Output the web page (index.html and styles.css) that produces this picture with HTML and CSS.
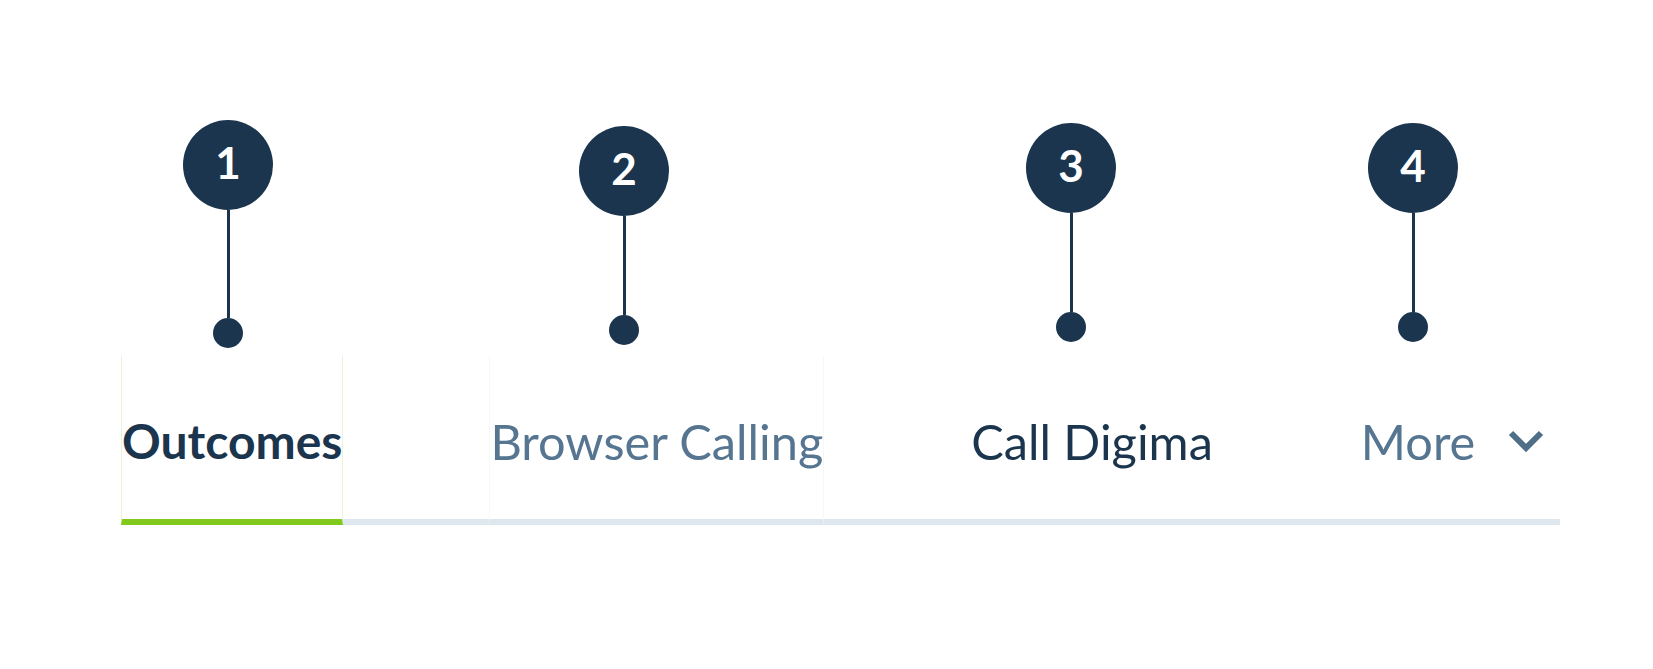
FILE: index.html
```html
<!DOCTYPE html>
<html lang="en">
<head>
  <meta charset="UTF-8">
  <title>Tabs</title>
  <link rel="stylesheet" href="styles.css">
</head>
<body>

  <div class="stage">
    <div class="pin pin1"><div class="bubble">1</div><div class="stem"></div><div class="dot"></div></div>
    <div class="pin pin2"><div class="bubble">2</div><div class="stem"></div><div class="dot"></div></div>
    <div class="pin pin3"><div class="bubble">3</div><div class="stem"></div><div class="dot"></div></div>
    <div class="pin pin4"><div class="bubble">4</div><div class="stem"></div><div class="dot"></div></div>

    <nav class="tabs">
      <a class="tab active">Outcomes</a>
      <a class="tab muted framed">Browser Calling</a>
      <a class="tab">Call Digima</a>
      <a class="tab muted more">More
        <svg class="chevron" width="36" height="22" viewBox="0 0 36 22">
          <polyline points="3,3 18,18 33,3" fill="none" stroke="#4f6f88" stroke-width="6"/>
        </svg>
      </a>
    </nav>
  </div>

</body>
</html>
```

FILE: styles.css
```css
html {
  box-sizing: border-box;
  background: #fff;
}

*, *:before, *:after {
  box-sizing: inherit;
}

body {
  margin: 0;
  font-family: 'Lato', 'Liberation Sans', sans-serif;
  color: #1a354d;
}

.stage {
  position: relative;
  padding: 356px 0 0 121px;
  height: 669px;
}

.tabs {
  display: flex;
  gap: 146px;
  width: 1439px;
  border-bottom: 6px solid #dfe7ee;
}

.tab {
  display: flex;
  align-items: center;
  padding: 56px 0 49px;
  font-size: 48.7px;
  line-height: 58px;
  margin-bottom: -6px;
  border-bottom: 6px solid transparent;
  border-left: 1px solid transparent;
  border-right: 1px solid transparent;
}

.tab.active {
  font-size: 48px;
  font-weight: 700;
  border-bottom-color: #82c91e;
  border-left-color: #e8f3da;
  border-right-color: #e8f3da;
}

.tab.framed {
  border-left-color: #f5f7f9;
  border-right-color: #f5f7f9;
}

.muted {
  color: #557591;
}

.chevron {
  margin-left: 33px;
}

/* annotation pins */
.pin {
  position: absolute;
  width: 90px;
  display: flex;
  flex-direction: column;
  align-items: center;
}

.bubble {
  width: 90px;
  height: 90px;
  border-radius: 50%;
  background: #1a354d;
  color: #fff;
  font-size: 44px;
  font-weight: 700;
  line-height: 1;
  display: flex;
  align-items: center;
  justify-content: center;
  padding-bottom: 7px;
}

.stem {
  width: 3px;
  height: 99px;
  background: #1a354d;
}

.dot {
  width: 30px;
  height: 30px;
  border-radius: 50%;
  background: #1a354d;
}

.pin1 { left: 183px; top: 120px; }
.pin1 .stem { height: 108px; }
.pin2 { left: 579px; top: 126px; }
.pin3 { left: 1026px; top: 123px; }
.pin4 { left: 1368px; top: 123px; }
```
